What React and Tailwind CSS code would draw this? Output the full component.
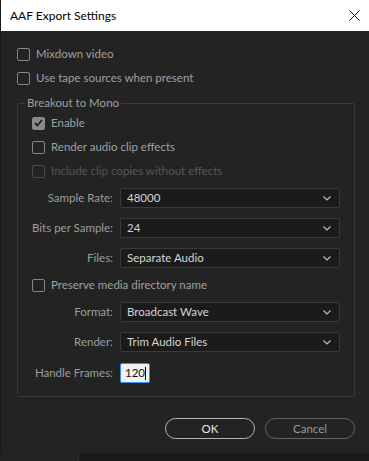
import React from 'react';

const font = { fontFamily: 'Lato, "Noto Sans", sans-serif' };

function Check({ label, checked, disabled }) {
  return (
    <div className="flex items-center h-[24px]">
      <div
        className={`w-[13px] h-[13px] rounded-[2px] border-[1.5px] flex items-center justify-center ${
          disabled ? 'border-[#4a4a4a]' : checked ? 'border-[#8a8a8a] bg-[#8a8a8a]' : 'border-[#858585]'
        }`}
      >
        {checked && (
          <svg width="9" height="8" viewBox="0 0 9 8">
            <path d="M1 4 L3.5 6.5 L8 1" stroke="#1e1e1e" strokeWidth="1.8" fill="none" />
          </svg>
        )}
      </div>
      <span className={`ml-[6px] text-[11.5px] ${disabled ? 'text-[#575757]' : 'text-[#a0a0a0]'}`}>{label}</span>
    </div>
  );
}

function SelectRow({ label, value }) {
  return (
    <div className="flex items-center h-[20px]">
      <span className="w-[95px] text-right text-[11.5px] text-[#9d9d9d]">{label}</span>
      <div className="ml-[7px] w-[220px] h-[20px] bg-[#1b1b1b] border border-[#3a3a3a] rounded-[2px] flex items-center justify-between pl-[6px] pr-[8px]">
        <span className="text-[11.5px] text-[#d4d4d4]">{value}</span>
        <svg width="8" height="5" viewBox="0 0 8 5">
          <path d="M0.5 0.5 L4 4 L7.5 0.5" stroke="#bdbdbd" strokeWidth="1.2" fill="none" />
        </svg>
      </div>
    </div>
  );
}

export default function App() {
  return (
    <div className="w-[369px] h-[461px] bg-[#1a1a1a] flex flex-col overflow-hidden" style={font}>
      <div className="h-[453px] bg-[#232323] flex flex-col border-l border-[#1a1a1a]">
        <div className="h-[31px] bg-white flex items-center justify-between pl-[9px] pr-[9px]">
          <span className="text-[12px] text-black">AAF Export Settings</span>
          <svg width="11" height="11" viewBox="0 0 11 11">
            <path d="M0.5 0.5 L10.5 10.5 M10.5 0.5 L0.5 10.5" stroke="#111" strokeWidth="1" />
          </svg>
        </div>

        <div className="pt-[11px] pl-[16px]">
          <Check label="Mixdown video" />
          <Check label="Use tape sources when present" />
        </div>

        <fieldset className="mt-[5px] ml-[16px] w-[338px] border border-[#3a3a3a] rounded-[2px] pb-[13px]">
          <legend className="ml-[7px] px-[2px] text-[11.5px] leading-[16px] text-[#a0a0a0]">Breakout to Mono</legend>
          <div className="pl-[14px]">
            <Check label="Enable" checked />
            <Check label="Render audio clip effects" />
            <Check label="Include clip copies without effects" disabled />
          </div>
          <div className="flex flex-col mt-[5px] gap-[10px]">
            <SelectRow label="Sample Rate:" value="48000" />
            <SelectRow label="Bits per Sample:" value="24" />
            <SelectRow label="Files:" value="Separate Audio" />
          </div>
          <div className="pl-[14px] mt-[5px]">
            <Check label="Preserve media directory name" />
          </div>
          <div className="flex flex-col mt-[5px] gap-[10px]">
            <SelectRow label="Format:" value="Broadcast Wave" />
            <SelectRow label="Render:" value="Trim Audio Files" />
          </div>
          <div className="flex items-center h-[20px] mt-[11px]">
            <span className="w-[95px] text-right text-[11.5px] text-[#9d9d9d]">Handle Frames:</span>
            <div className="ml-[7px] w-[30px] h-[20px] bg-[#eef2f7] border border-[#3d8ee6] rounded-[2px] flex items-center pl-[4px]">
              <span className="text-[11.5px] text-[#111]">120</span>
              <span className="w-px h-[13px] bg-black" />
            </div>
          </div>
        </fieldset>

        <div className="flex justify-end gap-[10px] pr-[14px] mt-[21px]">
          <button className="w-[90px] h-[21px] rounded-full border border-[#b5b5b5] text-[11.5px] text-[#e8e8e8] flex items-center justify-center">
            OK
          </button>
          <button className="w-[90px] h-[21px] rounded-full border border-[#656565] text-[11.5px] text-[#9a9a9a] flex items-center justify-center">
            Cancel
          </button>
        </div>
      </div>
      <div className="flex-1 flex">
        <div className="w-[79px] bg-[#232323] border-r border-[#2e2e2e]" />
        <div className="flex-1 bg-[#1b1b1b]" />
      </div>
    </div>
  );
}
